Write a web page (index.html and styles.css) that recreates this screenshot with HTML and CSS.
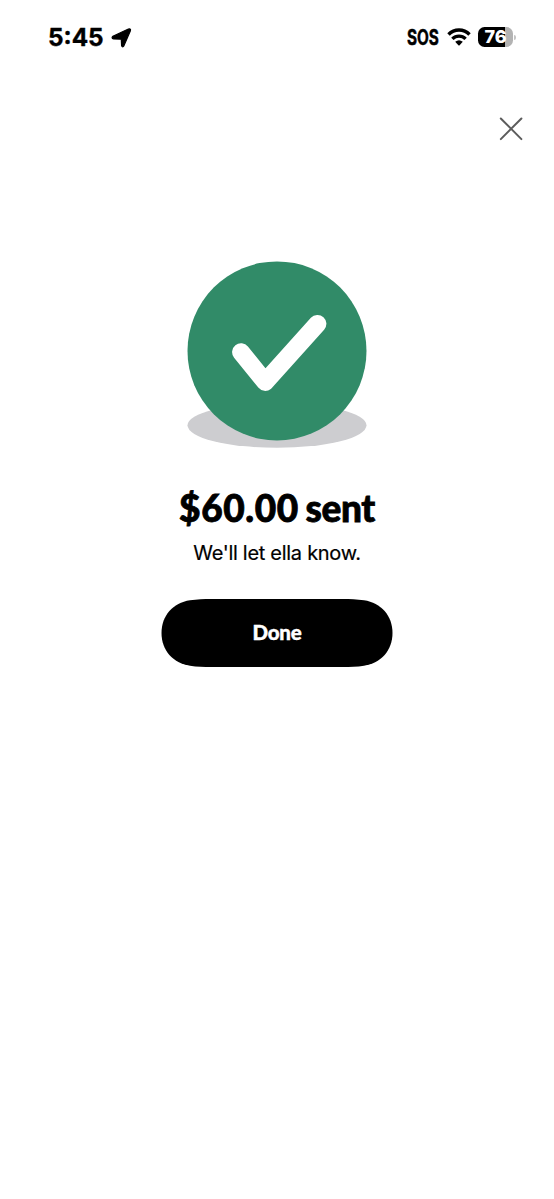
FILE: index.html
```html
<!DOCTYPE html>
<html lang="en">
<head>
<meta charset="utf-8">
<title>Payment sent</title>
<link rel="stylesheet" href="styles.css">
</head>
<body>
<div class="screen">
  <header class="status">
    <div class="status-left">
      <span class="time">5:45</span>
      <svg class="location" width="21" height="20" viewBox="0 0 21 20"><path d="M1.9 8.2 17.4 1Q20.2 .2 19.3 3L13 17.6Q11.6 20 10.6 17.8L10.3 11.2 2.6 11Q0 10.2 1.9 8.2Z" fill="#000" stroke="#000" stroke-width="1.2" stroke-linejoin="round"/></svg>
    </div>
    <div class="status-right">
      <span class="sos">SOS</span>
      <svg class="wifi" width="24" height="18" viewBox="0 0 24 18"><g fill="none" stroke="#000" stroke-width="3.4"><path d="M1.5 6.5C7.3.4 16.7.4 22.5 6.5"/><path d="M5.4 10.9C9.1 7.2 14.9 7.2 18.6 10.9"/></g><path d="M8.2 13.8Q12 10.7 15.8 13.8L12.6 17.2Q12 17.7 11.4 17.2Z"/></svg>
      <div class="battery"><span class="level">76</span></div>
      <span class="battery-tip"></span>
    </div>
  </header>
  <nav class="toolbar">
    <button class="close" aria-label="Close"><svg width="24" height="24" viewBox="0 0 24 24"><path d="M1.8 1.5 22.4 22.1M22.4 1.5 1.8 22.1" stroke="#5c5c5c" stroke-width="2" stroke-linecap="round"/></svg></button>
  </nav>
  <main class="content">
    <svg class="success" width="180" height="188" viewBox="187 261 180 188"><ellipse cx="277" cy="425.3" rx="89.5" ry="22.5" fill="#cdcdd0"/><circle cx="277" cy="350.9" r="89.5" fill="#318b68"/><path d="M241 352.2 265.2 382 317.5 323.8" fill="none" stroke="#fff" stroke-width="17.8" stroke-linecap="round" stroke-linejoin="round"/></svg>
    <h1 class="amount"><span class="figure">$60.00</span> <span class="verb">sent</span></h1>
    <p class="note">We'll let ella know.</p>
    <button class="done"><span class="done-label">Done</span></button>
  </main>
</div>
</body>
</html>
```
FILE: styles.css
```css
* { box-sizing: border-box; }
body { margin: 0; background: #fff; color: #000; font-family: Inter, sans-serif; }
button { border: 0; padding: 0; background: none; font: inherit; }
svg { display: block; flex: none; }
.screen { min-height: 1199px; background: #fff; }
.status { height: 74px; display: flex; justify-content: space-between; align-items: center; padding: 0 38px 0 48px; }
.status-left, .status-right { display: flex; align-items: center; }
.time { font-size: 24.3px; font-weight: 700; line-height: 30px; width: 56px; white-space: nowrap; -webkit-text-stroke: .4px #000; }
.location { margin: 1px 0 0 7px; }
.sos { margin-top: 1px; font-size: 21px; font-weight: 700; line-height: 30px; width: 33px; transform: scaleX(.73); transform-origin: left; white-space: nowrap; -webkit-text-stroke: .5px #000; }
.wifi { margin-left: 7px; }
.battery { margin-left: 7px; width: 35px; height: 20px; border-radius: 6.5px; background: linear-gradient(90deg, #000 27px, #b3b3b3 27px); display: flex; justify-content: center; align-items: center; }
.level { color: #fff; font-size: 18px; font-weight: 800; line-height: 20px; }
.battery-tip { width: 2px; height: 5px; margin-left: 1px; background: #c4c4c4; border-radius: 0 2px 2px 0; }
.toolbar { height: 187px; display: flex; justify-content: flex-end; padding: 43px 31px 0; }
.close { width: 24px; height: 24px; }
.content { display: flex; flex-direction: column; align-items: center; }
.amount { margin: 37px 0 0; font-family: Lato, sans-serif; font-size: 37px; font-weight: 900; line-height: 44px; white-space: nowrap; word-spacing: -2px; -webkit-text-stroke: .8px #000; }
.figure { letter-spacing: .6px; }
.verb { letter-spacing: -.4px; }
.note { margin: 10px 0 0; font-size: 20px; line-height: 26px; letter-spacing: -.29px; white-space: nowrap; -webkit-text-stroke: .2px #000; }
.done { margin-top: 33px; width: 232px; height: 68px; clip-path: path("M.5 34C.5 16.5 12 4 29 1.3C36 .3 43 0 50 0H182C189 0 196 .3 203 1.3C220 4 231.5 16.5 231.5 34C231.5 51.5 220 64 203 66.7C196 67.7 189 68 182 68H50C43 68 36 67.7 29 66.7C12 64 .5 51.5 .5 34Z"); background: #000; color: #fff; display: flex; align-items: center; justify-content: center; }
.done-label { font-family: Lato, sans-serif; font-size: 20.5px; font-weight: 900; line-height: 26px; letter-spacing: -.2px; -webkit-text-stroke: .4px #fff; transform: translateY(-1px); }
```
